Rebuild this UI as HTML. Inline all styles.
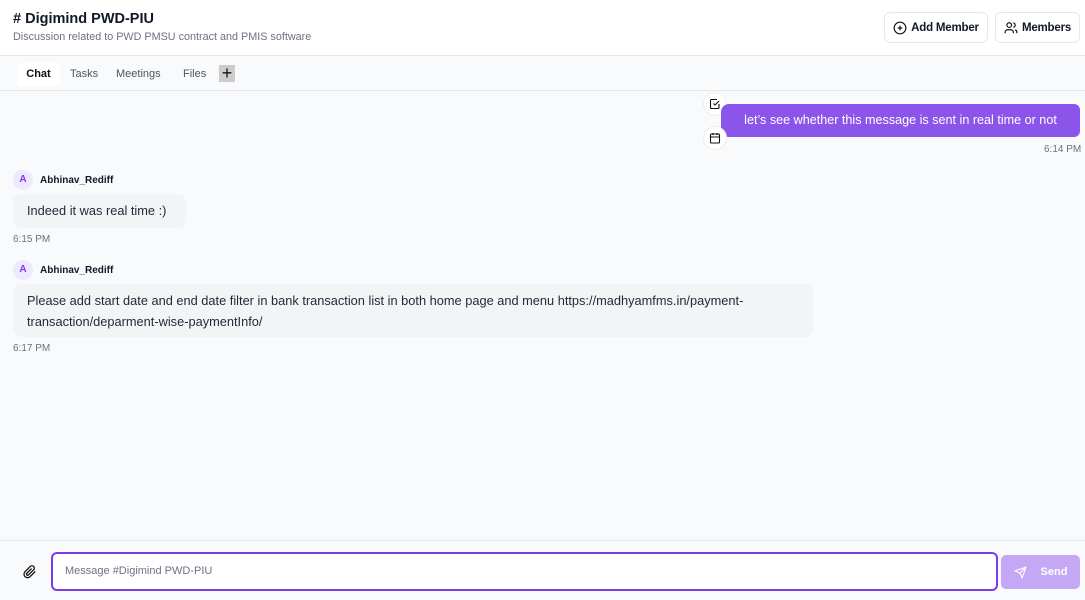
<!DOCTYPE html>
<html><head><meta charset="utf-8"><style>
*{box-sizing:border-box;margin:0;padding:0}
body{width:1085px;height:600px;overflow:hidden;background:#f9fafb;font-family:"Liberation Sans",sans-serif;color:#111827;position:relative}
.hdr{position:absolute;left:0;top:0;width:1085px;height:56px;background:#fff;border-bottom:1px solid #e5e7eb}
.title{position:absolute;left:13px;top:11px;font-size:14.5px;font-weight:bold}
.sub{position:absolute;left:13px;top:31px;font-size:10.8px;color:#6b7280}
.btn{position:absolute;top:12px;height:31px;border:1px solid #e5e7eb;border-radius:6px;background:#fff;font-size:11.5px;font-weight:bold;display:flex;align-items:center;justify-content:center;gap:4px;letter-spacing:-0.2px}
.tabs{position:absolute;left:0;top:56px;width:1085px;height:35px;background:#f9fafb;border-bottom:1px solid #e5e7eb}
.tab{position:absolute;top:7px;height:23px;font-size:11px;color:#4b5563;line-height:23px}
.t{font-size:10px;color:#6b7280;position:absolute}
.av{position:absolute;width:20px;height:20px;border-radius:50%;background:#ede9fe;color:#7c3aed;font-size:10px;text-align:center;line-height:20px;font-weight:bold}
.nm{position:absolute;font-size:10px;font-weight:bold}
.bub{position:absolute;background:#f3f4f6;border-radius:8px;font-size:12.8px;color:#1f2937;line-height:21px;padding:6px 14px}
.ic{position:absolute;width:24px;height:24px;border-radius:50%;background:#fff;border:1px solid #eee;display:flex;align-items:center;justify-content:center}
</style></head><body>
<div class="hdr">
<div class="title"># Digimind PWD-PIU</div>
<div class="sub">Discussion related to PWD PMSU contract and PMIS software</div>
<div class="btn" style="left:884px;width:104px"><svg width="14" height="14" viewBox="0 0 24 24" fill="none" stroke="#111" stroke-width="2"><circle cx="12" cy="12" r="10"/><path d="M12 8v8M8 12h8"/></svg>Add Member</div>
<div class="btn" style="left:995px;width:85px"><svg width="14" height="14" viewBox="0 0 24 24" fill="none" stroke="#111" stroke-width="2"><circle cx="9" cy="7" r="4"/><path d="M2 21v-2a4 4 0 0 1 4-4h6a4 4 0 0 1 4 4v2M16 3.1a4 4 0 0 1 0 7.8M22 21v-2a4 4 0 0 0-3-3.9"/></svg>Members</div>
</div>
<div class="tabs">
<div class="tab" style="left:17px;width:43px;background:#fff;border-radius:4px;color:#111;font-weight:bold;text-align:center">Chat</div>
<div class="tab" style="left:70px">Tasks</div>
<div class="tab" style="left:116px">Meetings</div>
<div class="tab" style="left:183px">Files</div>
<div style="position:absolute;left:219px;top:9px;width:16px;height:17px;background:#ccc;font-size:18px;line-height:16px;text-align:center;color:#111">+</div>
</div>
<div class="ic" style="left:703px;top:92px"><svg width="12" height="12" viewBox="0 0 24 24" fill="none" stroke="#111" stroke-width="2.2"><path d="M9 11l3 3 8-8"/><path d="M20 12v7a2 2 0 0 1-2 2H5a2 2 0 0 1-2-2V5a2 2 0 0 1 2-2h11"/></svg></div>
<div style="position:absolute;left:721px;top:104px;width:359px;height:33px;background:#8b55ea;border-radius:8px 6px 6px 8px;color:#fff;font-size:12.6px;line-height:33px;text-align:center">let’s see whether this message is sent in real time or not</div>
<div class="ic" style="left:703px;top:126px"><svg width="12" height="12" viewBox="0 0 24 24" fill="none" stroke="#111" stroke-width="2.2"><rect x="3" y="4" width="18" height="18" rx="2"/><path d="M16 2v4M8 2v4M3 10h18"/></svg></div>
<div class="t" style="left:1044px;top:144px">6:14 PM</div>
<div class="av" style="left:13px;top:170px">A</div><div class="nm" style="left:40px;top:175px">Abhinav_Rediff</div>
<div class="bub" style="left:13px;top:194px;width:173px;height:34px">Indeed it was real time :)</div>
<div class="t" style="left:13px;top:234px">6:15 PM</div>
<div class="av" style="left:13px;top:260px">A</div><div class="nm" style="left:40px;top:265px">Abhinav_Rediff</div>
<div class="bub" style="left:13px;top:284px;width:800px;height:53px;padding-top:6px">Please add start date and end date filter in bank transaction list in both home page and menu https://madhyamfms.in/payment-transaction/deparment-wise-paymentInfo/</div>
<div class="t" style="left:13px;top:343px">6:17 PM</div>
<div style="position:absolute;left:0;top:540px;width:1085px;height:60px;border-top:1px solid #e5e7eb;background:#f9fafb"></div>
<svg style="position:absolute;left:23px;top:565px" width="14" height="14" viewBox="0 0 24 24" fill="none" stroke="#111" stroke-width="2.2"><path d="M21 11l-9 9a6 6 0 0 1-8.5-8.5l9-9a4 4 0 0 1 5.7 5.7l-9 9a2 2 0 0 1-2.8-2.8l8.3-8.3"/></svg>
<div style="position:absolute;left:51px;top:552px;width:947px;height:39px;border:2px solid #7c3aed;border-radius:6px;background:#fff;font-size:11px;color:#6b7280;line-height:35px;padding-left:12px">Message #Digimind PWD-PIU</div>
<div style="position:absolute;left:1001px;top:555px;width:79px;height:34px;background:#c4a8f5;border-radius:5px;color:#fff;font-size:11px;font-weight:bold;display:flex;align-items:center;justify-content:center;gap:14px"><svg width="13" height="13" viewBox="0 0 24 24" fill="none" stroke="#fff" stroke-width="2"><path d="M22 2L11 13M22 2l-7 20-4-9-9-4z"/></svg>Send</div>
</body></html>
